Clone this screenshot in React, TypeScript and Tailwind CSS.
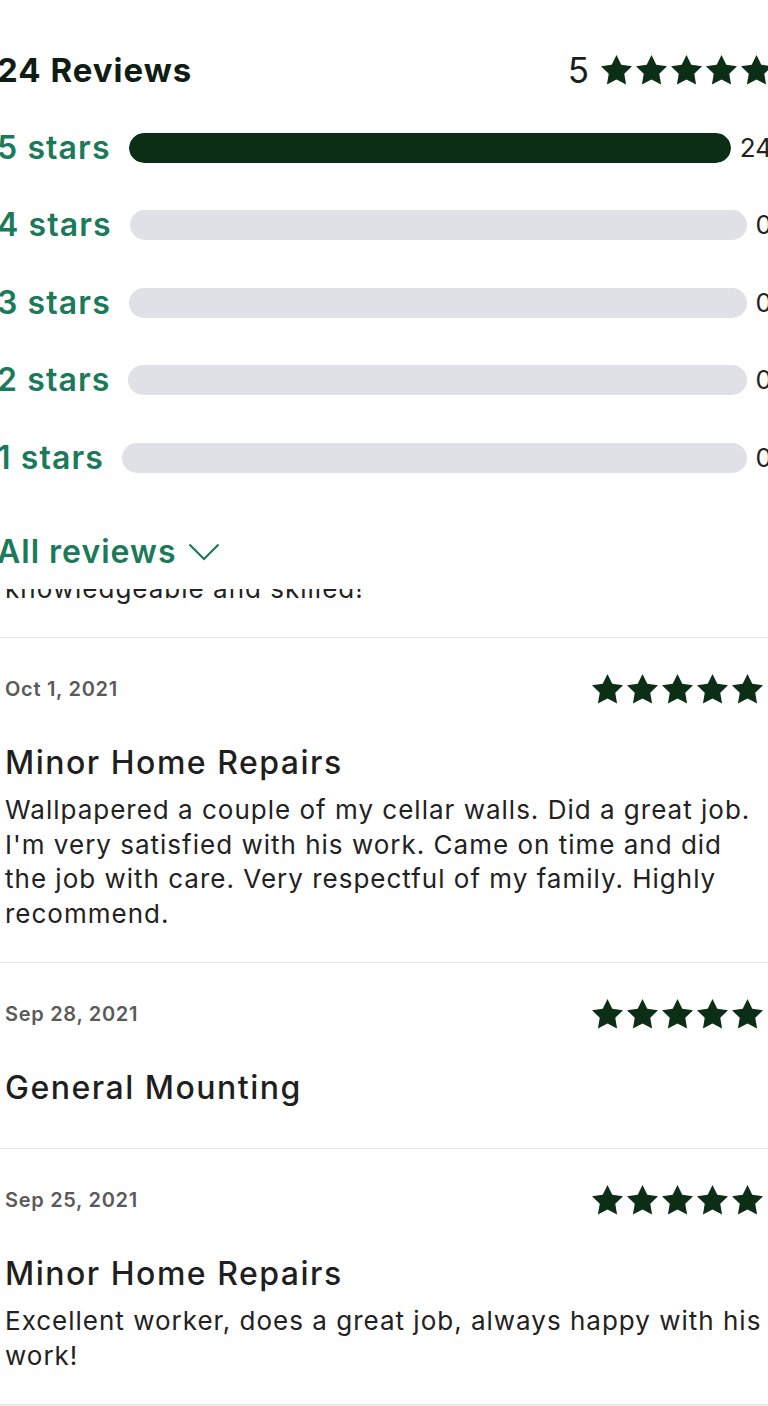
const FONT = { fontFamily: "Inter, 'Liberation Sans', sans-serif" };

function Star({ className }: { className: string }) {
  return (
    <svg viewBox="2 2 20 19.02" className={className} fill="currentColor">
      <polygon points="12,2 15.09,8.26 22,9.27 17,14.14 18.18,21.02 12,17.77 5.82,21.02 7,14.14 2,9.27 8.91,8.26" />
    </svg>
  );
}

function Stars() {
  return (
    <div className="flex items-center gap-[4px] text-[#0c2e17]">
      {[0, 1, 2, 3, 4].map((i) => (
        <Star key={i} className="h-[29.5px] w-[31px]" />
      ))}
    </div>
  );
}

const breakdown = [
  { label: "5 stars", count: 24 },
  { label: "4 stars", count: 0 },
  { label: "3 stars", count: 0 },
  { label: "2 stars", count: 0 },
  { label: "1 stars", count: 0 },
];

const reviews = [
  {
    date: "Oct 1, 2021",
    title: "Minor Home Repairs",
    body: "Wallpapered a couple of my cellar walls. Did a great job. I'm very satisfied with his work. Came on time and did the job with care. Very respectful of my family. Highly recommend.",
  },
  { date: "Sep 28, 2021", title: "General Mounting", body: "" },
  {
    date: "Sep 25, 2021",
    title: "Minor Home Repairs",
    body: "Excellent worker, does a great job, always happy with his work!",
  },
];

export default function App() {
  const total = 24;
  return (
    <div className="w-[768px] min-h-[1406px] overflow-hidden bg-white" style={FONT}>
      {/* summary */}
      <div className="-ml-[3px] w-[775px] pt-[50px] pb-[17px]">
        <div className="flex flex-col gap-[37.5px]">
          <div className="flex h-[40px] items-center justify-between">
            <h1 className="text-[33px] font-bold leading-none tracking-[1px] text-[#0f1d14]">24 Reviews</h1>
            <div className="flex items-center gap-[12px]">
              <span className="text-[35px] leading-none text-[#1c1c1c]">5</span>
              <Stars />
            </div>
          </div>
          {breakdown.map((row) => (
            <div key={row.label} className="flex h-[40px] items-center">
              <span className="mr-[18px] text-[32px] font-semibold leading-none tracking-[1.1px] text-[#1b7a5a]">
                {row.label}
              </span>
              <div className="h-[30px] flex-1 overflow-hidden rounded-full bg-[#dfe1e6]">
                <div className="h-full rounded-full bg-[#0c2e17]" style={{ width: `${(row.count / total) * 100}%` }} />
              </div>
              <span className="ml-[9px] text-[26px] leading-none text-[#222]">{row.count}</span>
            </div>
          ))}
        </div>
        <button className="mt-[54.5px] flex h-[40px] items-center gap-[12px] text-[#1b7a5a]">
          <span className="text-[32px] font-semibold leading-none tracking-[1px]">All reviews</span>
          <svg viewBox="0 0 32 18" className="h-[18px] w-[32px]" fill="none" stroke="currentColor" strokeWidth="2.2">
            <polyline points="1.5,1.5 16,16 30.5,1.5" />
          </svg>
        </button>
      </div>

      {/* list, scrolled under the summary */}
      <div className="h-[49px] overflow-hidden border-b border-[#e6e6e6] px-[5px]">
        <p className="-mt-[17px] text-[26px] leading-[34.5px] tracking-[1px] text-[#222]">knowledgeable and skilled!</p>
      </div>

      {reviews.map((r) => (
        <div
          key={r.date}
          className={`border-b border-[#e6e6e6] px-[5px] pt-[35px] ${r.body ? "pb-[31px]" : "pb-[40px]"}`}
        >
          <div className="flex h-[32px] items-center justify-between">
            <span className="text-[20px] font-semibold tracking-[0.7px] text-[#5a5a5a]">{r.date}</span>
            <Stars />
          </div>
          <h2 className="mt-[38px] text-[32px] font-medium leading-[40px] tracking-[1.5px] text-[#1f1f1f]">{r.title}</h2>
          {r.body && <p className="mt-[10px] text-[26px] leading-[34.5px] tracking-[1px] text-[#222]">{r.body}</p>}
        </div>
      ))}
      <div className="h-[10px] bg-[#f0f0f0]" />
    </div>
  );
}
